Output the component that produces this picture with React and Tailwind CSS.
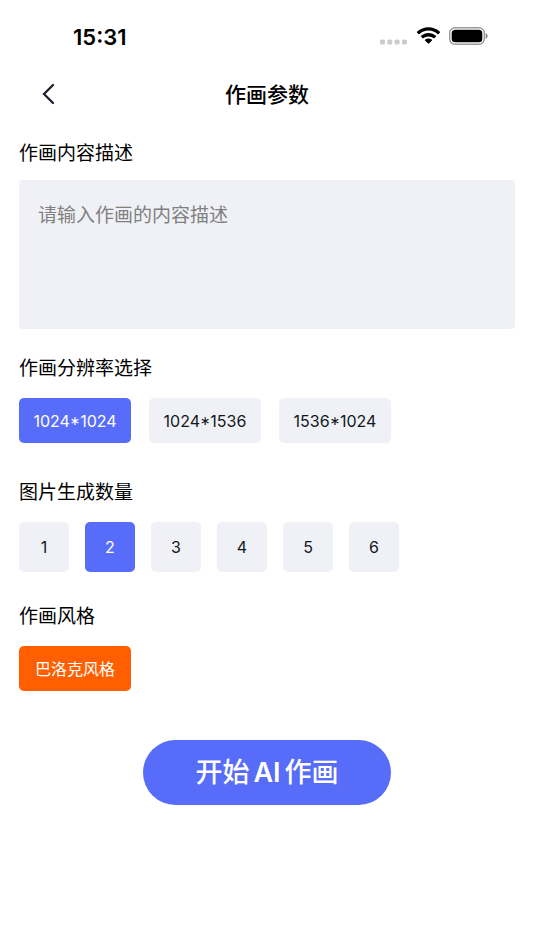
import React, { useState } from 'react';

const SIZES = ['1024*1024', '1024*1536', '1536*1024'];
const COUNTS = [1, 2, 3, 4, 5, 6];
const STYLES = ['巴洛克风格'];

// --- STATUS BAR ---
const StatusBar = () => (
  <div className="flex h-[72px] items-center justify-between pl-[73px] pr-[46px]">
    <span className="pt-0.5 text-[22px] leading-7 font-semibold">15:31</span>
    <div className="flex items-center gap-2">
      <svg width="28" height="6" viewBox="0 0 28 6" fill="#cbcbcd" className="mt-3">
        <rect x="0" y="0.5" width="5" height="5" rx="1.6" />
        <rect x="7.3" y="0.5" width="5" height="5" rx="1.6" />
        <rect x="14.6" y="0.5" width="5" height="5" rx="1.6" />
        <rect x="22" y="0.5" width="5" height="5" rx="1.6" />
      </svg>
      <svg width="25" height="18" viewBox="0 0 25 18" fill="#000">
        <path d="M12.5 3.6c3.5 0 6.7 1.3 9.1 3.6.2.2.5.2.7 0l1.7-1.8c.2-.2.2-.5 0-.7-6.4-6-16.6-6-23 0-.2.2-.2.5 0 .7l1.7 1.8c.2.2.5.2.7 0 2.4-2.3 5.6-3.6 9.1-3.6z" />
        <path d="M12.5 9.4c1.9 0 3.7.7 5.100 1.900.2.200.5.200.7 0l1.700-1.800c.2-.2.200-.5 0-.7-4.200-3.900-10.800-3.900-15 0-.2.200-.2.500 0 .7l1.700 1.800c.2.200.5.200.7 0 1.400-1.200 3.200-1.900 5.100-1.900z" />
        <path d="M16 13.4c.2-.2.2-.5 0-.7-2-1.7-5-1.7-7 0-.2.2-.2.5 0 .7l3.1 3.2c.2.2.6.2.8 0z" />
      </svg>
      <svg width="39" height="18" viewBox="0 0 39 18">
        <rect x="0.7" y="0.7" width="34.6" height="16.6" rx="5.5" fill="none" stroke="#999" strokeWidth="1.4" />
        <rect x="2.7" y="2.7" width="30.6" height="12.6" rx="3.6" fill="#000" />
        <path d="M36.6 6v6c1.200-.5 2-1.700 2-3s-.8-2.500-2-3z" fill="#888" />
      </svg>
    </div>
  </div>
);

// --- SHARED STYLES ---
const titleClass = 'block text-[19px] leading-7';

const optionClass = (active) =>
  active ? 'bg-[#576cf8] text-white' : 'bg-[#f0f1f6] text-[#111820]';

function App() {
  const [prompt, setPrompt] = useState('');
  const [size, setSize] = useState('1024*1024');
  const [count, setCount] = useState(2);
  const [style, setStyle] = useState('巴洛克风格');

  return (
    <div className="min-h-screen bg-white font-['Inter','Noto_Sans_CJK_SC',sans-serif] text-black">
      <StatusBar />

      {/* --- HEADER --- */}
      <header className="grid h-11 grid-cols-[60px_1fr_60px] items-center px-[19px]">
        <button type="button" aria-label="返回" className="flex h-11 items-center pl-[22px]">
          <svg width="14" height="22" viewBox="0 0 14 22" fill="none" stroke="#1c2230" strokeWidth="2.3" strokeLinecap="round">
            <path d="M12 2L3 11l9 9" />
          </svg>
        </button>
        <h1 className="pt-0.5 text-center text-[21px] leading-8 font-medium">作画参数</h1>
      </header>

      <main className="px-[19px] pt-6">
        {/* --- PROMPT --- */}
        <label htmlFor="prompt" className={titleClass}>作画内容描述</label>
        <textarea
          id="prompt"
          value={prompt}
          onChange={(e) => setPrompt(e.target.value)}
          placeholder="请输入作画的内容描述"
          className="mt-3 block h-[149px] w-full resize-none rounded bg-[#f0f1f6] px-[19px] py-[22px] text-[19px] leading-7 outline-none placeholder:text-[#808080]"
        />

        {/* --- RESOLUTION --- */}
        <h2 className={`${titleClass} mt-[26px]`}>作画分辨率选择</h2>
        <div className="mt-[15px] flex gap-[18px]">
          {SIZES.map((item) => (
            <button
              key={item}
              type="button"
              onClick={() => setSize(item)}
              className={`h-[45px] w-28 rounded-[5px] text-base ${optionClass(size === item)}`}
            >
              {item}
            </button>
          ))}
        </div>

        {/* --- IMAGE COUNT --- */}
        <h2 className={`${titleClass} mt-9`}>图片生成数量</h2>
        <div className="mt-[15px] flex gap-4">
          {COUNTS.map((n) => (
            <button
              key={n}
              type="button"
              onClick={() => setCount(n)}
              className={`size-[50px] rounded-[5px] text-base ${optionClass(count === n)}`}
            >
              {n}
            </button>
          ))}
        </div>

        {/* --- STYLE --- */}
        <h2 className={`${titleClass} mt-[31px]`}>作画风格</h2>
        <div className="mt-[15px] flex gap-[18px]">
          {STYLES.map((item) => (
            <button
              key={item}
              type="button"
              onClick={() => setStyle(item)}
              className={`h-[45px] w-28 rounded-[5px] text-base ${style === item ? 'bg-[#ff5f00] text-white' : 'bg-[#f0f1f6] text-[#111820]'}`}
            >
              {item}
            </button>
          ))}
        </div>

        {/* --- SUBMIT --- */}
        <button
          type="button"
          className="mx-auto mt-[49px] block h-[65px] w-[248px] rounded-full bg-[#576cf8] pt-0.5 text-[27px] font-medium text-white"
        >
          开始<span className="px-1 font-semibold">AI</span>作画
        </button>
      </main>
    </div>
  );
}

export default App;
